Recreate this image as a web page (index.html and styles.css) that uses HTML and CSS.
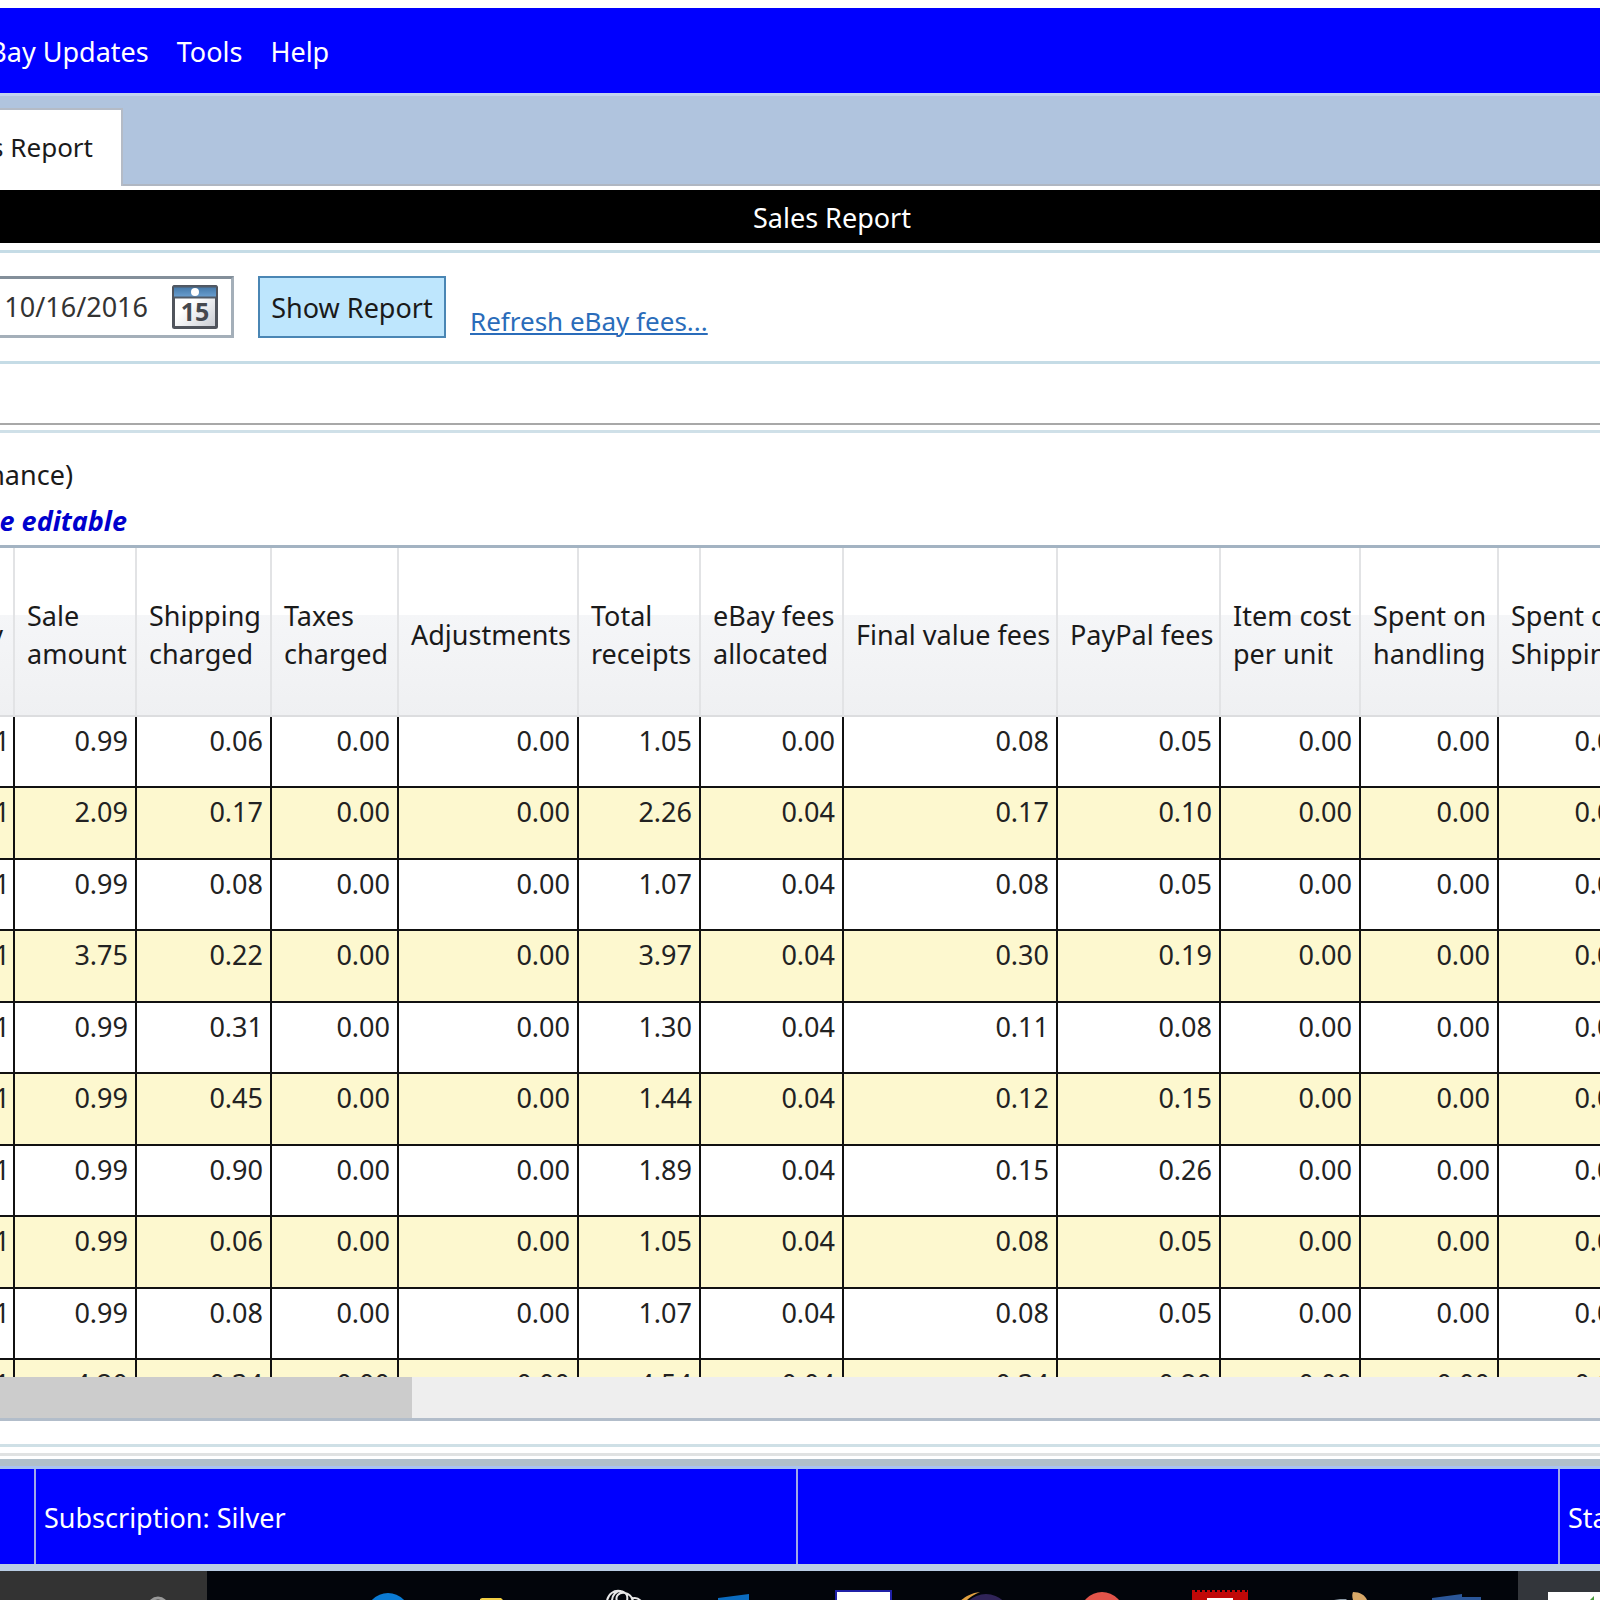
FILE: index.html
```html
<!DOCTYPE html>
<html lang="en">

<head>
  <meta charset="UTF-8">
  <meta name="viewport" content="width=device-width, initial-scale=1.0">
  <title>Sales Report</title>
  <link rel="stylesheet" href="styles.css">
</head>

<body>
  <div class="window">
    <nav class="menubar">
      <button type="button">eBay Updates</button>
      <button type="button">Tools</button>
      <button type="button">Help</button>
    </nav>

    <div class="tabs">
      <button type="button" class="tab">Sales Report</button>
    </div>

    <h1 class="title">Sales Report</h1>

    <!-- Date range and report actions -->
    <form class="filters">
      <div class="date-picker">
        <input type="text" class="date-input" value="10/16/2016" aria-label="End date">
        <button type="button" class="date-button" aria-label="Open calendar">
          <svg width="46" height="44" viewBox="0 0 46 44">
            <defs>
              <linearGradient id="page" x1="0" y1="0" x2="1" y2="1">
                <stop offset="0.4" stop-color="#fff" />
                <stop offset="1" stop-color="#c8cbd2" />
              </linearGradient>
              <linearGradient id="binding" x1="0" y1="0" x2="0" y2="1">
                <stop offset="0" stop-color="#4478a8" />
                <stop offset="1" stop-color="#6a9fd0" />
              </linearGradient>
            </defs>
            <rect x="1.500" y="1.500" width="43" height="41" rx="1" fill="url(#page)" stroke="#50545c" stroke-width="3" />
            <rect x="2" y="2" width="42" height="10" fill="url(#binding)" />
            <path d="M1 1.500H45M2 12.500H44" stroke="#505a66" stroke-width="2" />
            <circle cx="23" cy="7" r="4" fill="#fff" />
            <text x="23" y="36" text-anchor="middle" class="date-day">15</text>
          </svg>
        </button>
      </div>
      <button type="button" class="show-button">Show Report</button>
      <a href="#" class="refresh-link">Refresh eBay fees...</a>
    </form>

    <div class="summary"></div>

    <div class="report">
      <p class="note">nance)</p>
      <p class="note editable">e editable</p>

      <div class="grid">
        <table>
          <thead>
            <tr>
              <th class="col-qty">Qty</th>
              <th class="col-sale">Sale amount</th>
              <th class="col-shipping">Shipping charged</th>
              <th class="col-taxes">Taxes charged</th>
              <th class="col-adjust">Adjustments</th>
              <th class="col-total">Total receipts</th>
              <th class="col-ebay">eBay fees allocated</th>
              <th class="col-final">Final value fees</th>
              <th class="col-paypal">PayPal fees</th>
              <th class="col-cost">Item cost<br>per unit</th>
              <th class="col-spent">Spent on<br>handling</th>
              <th class="col-spent">Spent on<br>Shipping</th>
            </tr>
          </thead>
          <tbody>
            <tr><td>1</td><td>0.99</td><td>0.06</td><td>0.00</td><td>0.00</td><td>1.05</td><td>0.00</td><td>0.08</td><td>0.05</td><td>0.00</td><td>0.00</td><td>0.00</td></tr>
            <tr><td>1</td><td>2.09</td><td>0.17</td><td>0.00</td><td>0.00</td><td>2.26</td><td>0.04</td><td>0.17</td><td>0.10</td><td>0.00</td><td>0.00</td><td>0.00</td></tr>
            <tr><td>1</td><td>0.99</td><td>0.08</td><td>0.00</td><td>0.00</td><td>1.07</td><td>0.04</td><td>0.08</td><td>0.05</td><td>0.00</td><td>0.00</td><td>0.00</td></tr>
            <tr><td>1</td><td>3.75</td><td>0.22</td><td>0.00</td><td>0.00</td><td>3.97</td><td>0.04</td><td>0.30</td><td>0.19</td><td>0.00</td><td>0.00</td><td>0.00</td></tr>
            <tr><td>1</td><td>0.99</td><td>0.31</td><td>0.00</td><td>0.00</td><td>1.30</td><td>0.04</td><td>0.11</td><td>0.08</td><td>0.00</td><td>0.00</td><td>0.00</td></tr>
            <tr><td>1</td><td>0.99</td><td>0.45</td><td>0.00</td><td>0.00</td><td>1.44</td><td>0.04</td><td>0.12</td><td>0.15</td><td>0.00</td><td>0.00</td><td>0.00</td></tr>
            <tr><td>1</td><td>0.99</td><td>0.90</td><td>0.00</td><td>0.00</td><td>1.89</td><td>0.04</td><td>0.15</td><td>0.26</td><td>0.00</td><td>0.00</td><td>0.00</td></tr>
            <tr><td>1</td><td>0.99</td><td>0.06</td><td>0.00</td><td>0.00</td><td>1.05</td><td>0.04</td><td>0.08</td><td>0.05</td><td>0.00</td><td>0.00</td><td>0.00</td></tr>
            <tr><td>1</td><td>0.99</td><td>0.08</td><td>0.00</td><td>0.00</td><td>1.07</td><td>0.04</td><td>0.08</td><td>0.05</td><td>0.00</td><td>0.00</td><td>0.00</td></tr>
            <tr><td>1</td><td>4.20</td><td>0.34</td><td>0.00</td><td>0.00</td><td>4.54</td><td>0.04</td><td>0.34</td><td>0.20</td><td>0.00</td><td>0.00</td><td>0.00</td></tr>
          </tbody>
        </table>
      </div>
      <div class="scrollbar">
        <div class="scroll-thumb"></div>
      </div>
    </div>

    <footer class="statusbar">
      <span class="status-item"></span>
      <span class="status-item wide">Subscription: Silver</span>
      <span class="status-item wide"></span>
      <span class="status-item">Status</span>
    </footer>
  </div>

  <div class="taskbar">
    <div class="search">
      <svg width="16" height="29" viewBox="0 0 16 29"><circle cx="8" cy="36" r="9" fill="none" stroke="#999" stroke-width="3" /></svg>
    </div>
    <div class="apps">
      <button type="button" aria-label="Browser">
        <svg width="60" height="29" viewBox="0 0 60 29"><circle cx="30" cy="44" r="22" fill="#0b7bd4" /></svg>
      </button>
      <button type="button" aria-label="Files">
        <svg width="60" height="29" viewBox="0 0 60 29"><path d="M3 29V28L5 27H24L26 29Z" fill="#f2cf45" /></svg>
      </button>
      <button type="button" aria-label="Notes">
        <svg width="60" height="29" viewBox="0 0 60 29">
          <path d="M11 30C12 23 18 19 24 20C31 21 32 25 31 30M16 30C16 24 20 20 25 20M21 30C19 25 23 21 29 22C34 23 36 26 37 30M35 28C39 26 43 28 45 30" fill="none" stroke="#e8e8e8" stroke-width="2" />
        </svg>
      </button>
      <button type="button" aria-label="Mail">
        <svg width="60" height="29" viewBox="0 0 60 29"><path d="M3 29V27L34 23V29Z" fill="#0b6cc0" /></svg>
      </button>
      <button type="button" aria-label="Editor">
        <svg width="60" height="29" viewBox="0 0 60 29"><rect x="2" y="20" width="55" height="12" fill="#fff" stroke="#2020a8" stroke-width="2" /></svg>
      </button>
      <button type="button" aria-label="Eclipse">
        <svg width="60" height="29" viewBox="0 0 60 29">
          <circle cx="33" cy="48" r="25" fill="#302458" />
          <path d="M7 30C12 26 18 22 27 21C20 24 16 27 13 30Z" fill="#e0a040" />
        </svg>
      </button>
      <button type="button" aria-label="Recorder">
        <svg width="60" height="29" viewBox="0 0 60 29"><circle cx="30" cy="43" r="22" fill="#e2544a" /></svg>
      </button>
      <button type="button" aria-label="Stamps">
        <svg width="60" height="29" viewBox="0 0 60 29">
          <rect x="1" y="21" width="56" height="8" fill="#c00808" />
          <path d="M1 20H57" stroke="#c00808" stroke-width="2" stroke-dasharray="3 2" />
          <rect x="16" y="27" width="26" height="2" fill="#fff" />
        </svg>
      </button>
      <button type="button" aria-label="Paint">
        <svg width="60" height="29" viewBox="0 0 60 29">
          <path d="M43 29C42 26 42 23 43 21C50 21 55 24 57 29Z" fill="#d8a868" />
          <path d="M24 29L30 28H36L37 29Z" fill="#8a98a4" />
        </svg>
      </button>
      <button type="button" aria-label="Documents">
        <svg width="60" height="29" viewBox="0 0 60 29"><path d="M3 29V27L33 23V26H52V29Z" fill="#2b579a" /></svg>
      </button>
      <button type="button" class="active" aria-label="Reports">
        <svg width="60" height="29" viewBox="0 0 60 29">
          <rect x="0" y="21" width="60" height="8" fill="#fff" />
          <path d="M42 29L46 25V29Z" fill="#4a9a3c" />
        </svg>
      </button>
    </div>
  </div>
</body>

</html>
```
FILE: styles.css
```css
* {
  box-sizing: border-box;
}

body {
  margin: 0;
  height: 100vh;
  display: flex;
  flex-direction: column;
  overflow: hidden;
  background: #fff;
  color: #1a1a1a;
  font-family: "Noto Sans", "Open Sans", sans-serif;
  font-size: 27px;
  line-height: 38px;
}

button,
input {
  margin: 0;
  padding: 0;
  border: none;
  background: none;
  color: inherit;
  font: inherit;
}

/* The window is wider than the screen on both sides */
.window {
  flex: 1;
  min-height: 0;
  display: flex;
  flex-direction: column;
  margin: 0 -164px 0 -100px;
  padding-top: 8px;
}

.menubar {
  display: flex;
  gap: 28px;
  height: 88px;
  padding: 2px 0 0 74px;
  border-bottom: 3px solid #c0d2ee;
  background: #0000ff;
  color: #fff;
}

.tabs {
  display: flex;
  align-items: flex-end;
  height: 90px;
  background: #b0c4de;
  border-bottom: 2px solid #b0b7c2;
}

.tab {
  width: 223px;
  height: 78px;
  margin-bottom: -2px;
  padding: 0 28px 2px 0;
  border: 2px solid #b4bbc6;
  border-bottom: none;
  background: #fff;
  font-size: 26px;
  text-align: right;
}

.title {
  height: 53px;
  margin: 4px 0 7px;
  padding-top: 9px;
  background: #000;
  color: #fff;
  font-size: 27px;
  font-weight: normal;
  line-height: 38px;
  text-align: center;
}

.filters {
  display: flex;
  gap: 24px;
  height: 114px;
  padding: 23px 0 24px 84px;
  border-top: 3px solid #c5dce6;
  border-bottom: 3px solid #c5dce6;
}

.date-picker {
  display: flex;
  align-items: center;
  justify-content: flex-end;
  gap: 24px;
  width: 250px;
  height: 62px;
  padding-right: 13px;
  border: 3px solid #a4afb9;
  border-top-color: #838f9a;
}

.date-input {
  width: 150px;
  color: #333;
  text-align: right;
}

.date-button {
  height: 44px;
}

.date-button svg {
  display: block;
}

.date-day {
  fill: #45484e;
  font-size: 25px;
  font-weight: bold;
}

.show-button {
  width: 188px;
  height: 62px;
  padding-top: 2px;
  border: 2px solid #4a86b4;
  background: #bee6fd;
}

.refresh-link {
  align-self: flex-end;
  margin-bottom: -3px;
  color: #2a6cba;
  font-size: 26px;
  text-decoration-thickness: 2px;
  text-underline-offset: 2px;
}

.summary {
  height: 61px;
  border-bottom: 2px solid #a8a8a8;
}

.report {
  flex: 1;
  min-height: 0;
  display: flex;
  flex-direction: column;
  margin-top: 5px;
  padding-top: 23px;
  padding-bottom: 23px;
  border-top: 3px solid #cfe0e8;
  border-bottom: 3px solid #cfe0e6;
}

.note {
  width: 173px;
  margin: 0 0 8px;
  text-align: right;
}

.editable {
  width: 227px;
  margin-bottom: 5px;
  color: #0000cd;
  font-weight: bold;
  font-style: italic;
}

.grid {
  flex: 1;
  min-height: 0;
  overflow: hidden;
  border-top: 3px solid #a3b3c2;
}

table {
  width: 1737px;
  table-layout: fixed;
  border-spacing: 0;
}

th {
  height: 169px;
  padding: 6px 0 0 12px;
  border-right: 2px solid #e2e3e5;
  border-bottom: 2px solid #dcdddf;
  background: linear-gradient(#fff 40%, #f5f6f8 40%, #eff0f2);
  font-weight: normal;
  text-align: left;
}

td {
  height: 71px;
  padding: 5px 7px 0 0;
  border-right: 2px solid #111;
  border-bottom: 2px solid #111;
  color: #222;
  text-align: right;
  vertical-align: top;
}

td:first-child {
  padding-right: 3px;
}

tbody tr:nth-child(even) td {
  height: 72px;
  background: #fdf8cf;
}

.col-qty {
  width: 115px;
  padding-right: 10px;
  text-align: right;
}

.col-sale,
.col-total {
  width: 122px;
}

.col-shipping {
  width: 135px;
}

.col-taxes {
  width: 127px;
}

.col-adjust {
  width: 180px;
}

.col-ebay {
  width: 143px;
}

.col-final {
  width: 214px;
}

.col-paypal {
  width: 163px;
}

.col-cost {
  width: 140px;
}

.col-spent {
  width: 138px;
}

.scrollbar {
  height: 44px;
  border-bottom: 3px solid #b2bdca;
  background: #eee;
}

.scroll-thumb {
  width: 512px;
  height: 41px;
  background: #ccc;
}

.statusbar {
  display: flex;
  height: 118px;
  margin-top: 6px;
  border-top: 3px solid #e0e2e2;
  border-bottom: 7px solid #b9cde4;
  background: linear-gradient(#fff 3px, #b0bfca 3px, #b0bfca 10px, #a9c2f2 10px, #a9c2f2 13px, #0000ff 13px);
  color: #fff;
}

.status-item {
  flex: none;
  width: 136px;
  margin-top: 13px;
  padding: 30px 8px 0;
  border-right: 2px solid #a0a8e8;
}

.wide {
  width: 762px;
}

.taskbar {
  flex: none;
  display: flex;
  height: 29px;
  overflow: hidden;
  background: #02050b;
}

.search {
  flex: none;
  width: 207px;
  padding-left: 150px;
  background: #333;
}

.apps {
  display: flex;
  margin-left: 121px;
}

.apps button {
  flex: none;
  width: 119px;
  height: 29px;
}

.search svg {
  display: block;
}

.apps svg {
  display: block;
  margin: 0 auto;
}

.apps .active {
  background: #33363b;
}
```
